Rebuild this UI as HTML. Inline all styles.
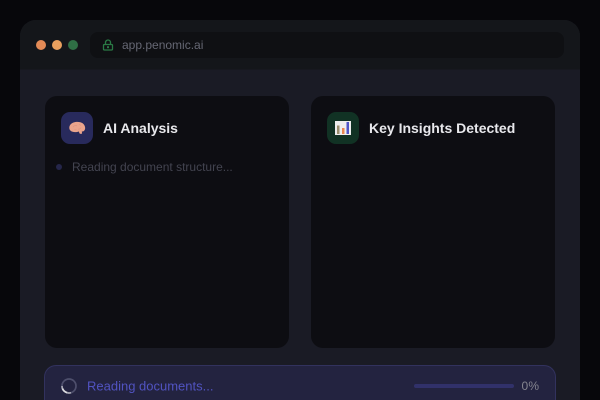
<!DOCTYPE html>
<html>
<head>
<meta charset="utf-8">
<style>
*{box-sizing:border-box;margin:0;padding:0}
html,body{width:600px;height:400px;overflow:hidden;background:#07070b;font-family:"Liberation Sans",sans-serif}
.abs{position:absolute}
#win{left:20px;top:20px;width:560px;height:380px;background:#1a1b25;border-radius:16px 16px 0 0;overflow:hidden}
#bar{left:0;top:0;width:560px;height:50px;background:#14161a;border-bottom:1px solid #17181f}
.dot{width:10px;height:10px;border-radius:50%;top:20px}
#url{left:70px;top:12px;width:474px;height:26px;border-radius:8px;background:#0f1013}
#urltext{left:32px;top:0;line-height:26px;font-size:12px;color:#666874;white-space:nowrap}
.card{top:76px;width:244px;height:252px;background:#0d0d12;border-radius:12px}
.ico{left:16px;top:16px;width:32px;height:32px;border-radius:9px}
.title{left:58px;top:16px;line-height:32px;font-size:14px;font-weight:700;color:#e8e8ec;white-space:nowrap}
#prog{left:24px;top:345px;width:512px;height:35px;border-radius:12px 12px 0 0;background:#232340;border:1px solid #32325e;border-bottom:0}
#ptext{left:42px;top:10px;line-height:20px;font-size:13px;color:#5153c0;white-space:nowrap;transform:translateY(.5px)}
#track{left:369px;top:18px;width:100px;height:4px;border-radius:2px;background:#31316a}
#pct{left:476.500px;top:10px;line-height:20px;font-size:12px;color:#85858f;white-space:nowrap;letter-spacing:.2px}
</style>
</head>
<body>
<div id="win" class="abs">
  <div id="bar" class="abs">
    <div class="dot abs" style="left:16px;background:#e38a56"></div>
    <div class="dot abs" style="left:32px;background:#e9a05e"></div>
    <div class="dot abs" style="left:48px;background:#2f6f45"></div>
    <div id="url" class="abs">
      <svg class="abs" style="left:12px;top:7px" width="12" height="12" viewBox="0 0 12 12" fill="none">
        <rect x="1.500" y="5.500" width="9" height="5.500" rx="1" stroke="#2a7a45" stroke-width="1.300"/>
        <path d="M3.500 5.500V3.500a2.500 2.500 0 0 1 5 0v2" stroke="#2a7a45" stroke-width="1.300"/>
        <rect x="5" y="7.200" width="2" height="2" fill="#2a7a45"/>
      </svg>
      <div id="urltext" class="abs">app.penomic.ai</div>
    </div>
  </div>

  <div class="card abs" style="left:25px">
    <div class="ico abs" style="background:#282a5c">
      <svg class="abs" style="left:7.500px;top:9px" width="17" height="14" viewBox="0 0 17 14">
        <path d="M.3 7C.2 4.500 2 2.300 4.500 1.500 7.500.4 11.500.6 13.800 2.400c2 1.600 2.900 4.200 2 6.300-.5 1.200-1.600 1.900-3 1.800l.3 2c-.9.500-2 .4-2.700-.3l-.5-1.700c-1.700.6-4.200 1-6.300.3C1.600 10.200.4 8.800.3 7z" fill="#eaa48c"/>
        <path d="M4 6c1-1.500 3-2 4-1M9 8c1 .5 2.500 0 3-1.500M5.500 8.500c.6.400 1.300.400 2 .2M10 3.300c.8.200 1.400.7 1.800 1.300" stroke="#df9480" stroke-width=".7" fill="none"/>
      </svg>
    </div>
    <div class="title abs">AI Analysis</div>
    <div class="abs" style="left:11px;top:68px;width:6px;height:6px;border-radius:50%;background:#25264a"></div>
    <div class="abs" style="left:27px;top:61px;line-height:20px;font-size:12px;color:#434450;white-space:nowrap">Reading document structure...</div>
  </div>

  <div class="card abs" style="left:291px">
    <div class="ico abs" style="background:#113224">
      <svg class="abs" style="left:8px;top:8px" width="16" height="16" viewBox="0 0 16 16">
        <rect x="0" y="1" width="16" height="14" fill="#eeeeee"/>
        <rect x="2" y="5.500" width="2.500" height="8.500" fill="#9a8e6e"/>
        <rect x="7" y="8" width="2.500" height="6" fill="#e88650"/>
        <rect x="11.500" y="2" width="2.500" height="12" fill="#4f55c8"/>
      </svg>
    </div>
    <div class="title abs">Key Insights Detected</div>
  </div>

  <div id="prog" class="abs">
    <svg class="abs" style="left:16px;top:12px" width="16" height="16" viewBox="0 0 16 16" fill="none">
      <circle cx="8" cy="8" r="7" stroke="#4e4f6c" stroke-width="1.700"/>
      <path d="M10 14.700A7 7 0 0 1 1 8" stroke="#a8a8b4" stroke-width="1.700"/>
      <path d="M6 14.700A7 7 0 0 1 1.500 10.500" stroke="#dcdce0" stroke-width="1.700"/>
    </svg>
    <div id="ptext" class="abs">Reading documents...</div>
    <div id="track" class="abs"></div>
    <div id="pct" class="abs">0%</div>
  </div>
</div>
</body>
</html>
